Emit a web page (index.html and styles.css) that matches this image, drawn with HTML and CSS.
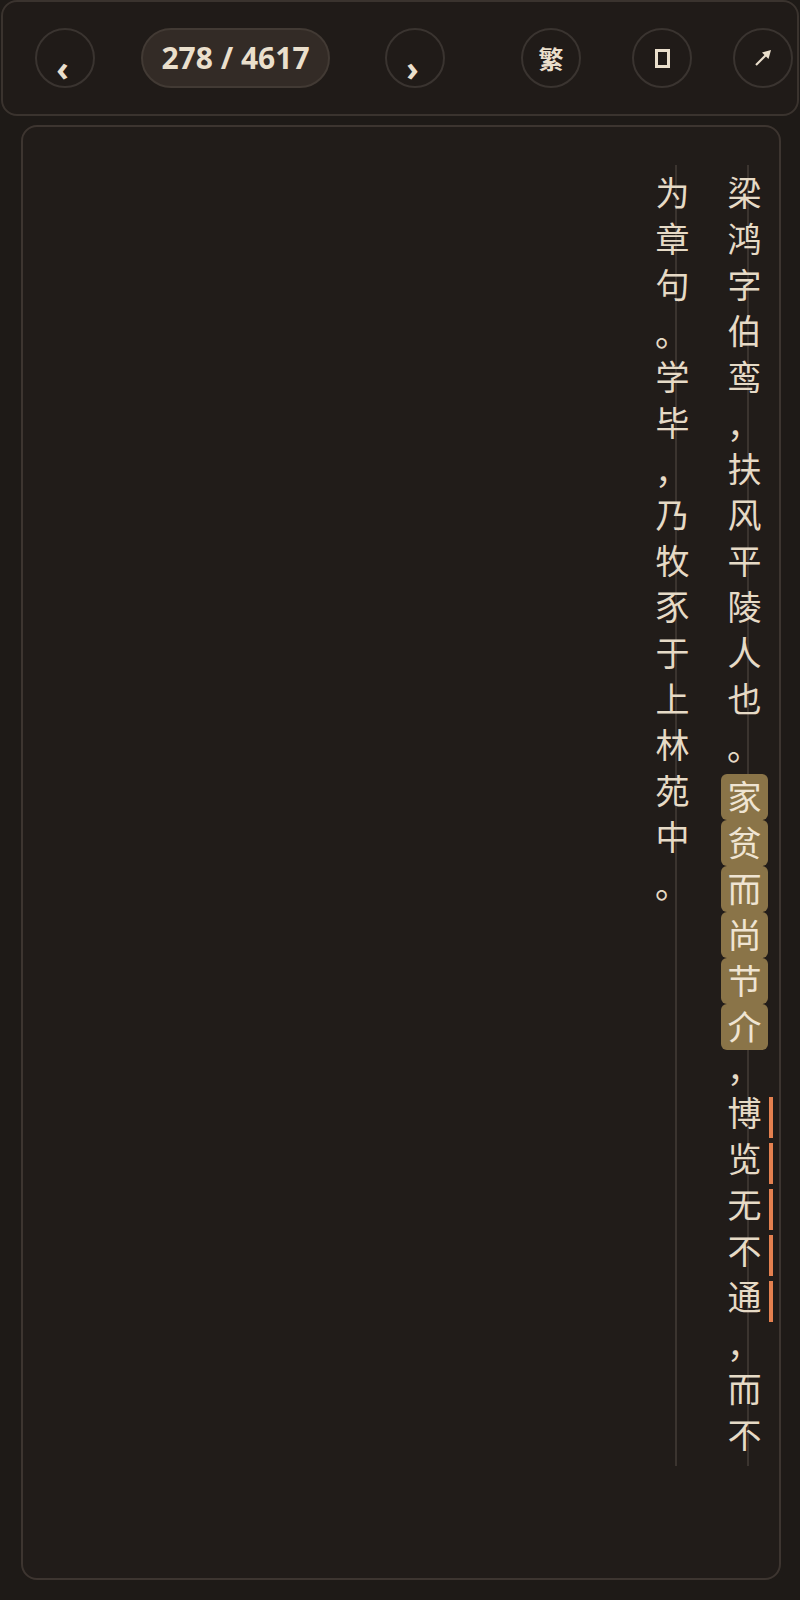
FILE: index.html
```html
<!DOCTYPE html>
<html>
<head>
    <meta charset="utf-8" />
    <title>梁鸿传</title>
    <link rel="stylesheet" href="styles.css">
</head>
<body>
    <div class="bar">
        <button class="btn prev">‹</button>
        <div class="page">278 / 4617</div>
        <button class="btn next">›</button>
        <button class="btn lang">繁</button>
        <button class="btn layout"><span class="tofu"></span></button>
        <button class="btn share">
            <svg width="18" height="18" viewBox="0 0 18 18">
                <line x1="2" y1="16" x2="13" y2="5" stroke="#eadfcc" stroke-width="2.2" />
                <polygon points="17,1 8,3.5 14.5,10" fill="#eadfcc" />
            </svg>
        </button>
    </div>
    <div class="sheet">
        <div class="cols">
            <div class="col">梁鸿字伯鸾<span class="pu">，</span>扶风平陵人也<span class="pu">。</span><span class="hl">家</span><span class="hl">贫</span><span class="hl">而</span><span class="hl">尚</span><span class="hl">节</span><span class="hl">介</span><span class="pu">，</span><span class="mk">博</span><span class="mk">览</span><span class="mk">无</span><span class="mk">不</span><span class="mk">通</span><span class="pu">，</span>而不</div>
            <div class="col">为章句<span class="pu">。</span>学毕<span class="pu">，</span>乃牧豕于上林苑中<span class="pu">。</span></div>
        </div>
    </div>
</body>
</html>
```

FILE: styles.css
```css
html, body {
    margin: 0;
    padding: 0;
    background: #1e1a17;
    font-family: "Noto Sans", "Noto Sans CJK SC", sans-serif;
    color: #eadfcc;
}

.bar {
    display: flex;
    align-items: center;
    box-sizing: border-box;
    height: 116px;
    margin: 0 1px;
    padding-left: 32px;
    border: 2px solid #3a332e;
    border-radius: 16px;
    background: #201b18;
}

.btn {
    display: flex;
    align-items: center;
    justify-content: center;
    flex: none;
    box-sizing: border-box;
    width: 60px;
    height: 60px;
    padding: 0;
    border: 2px solid #3a3430;
    border-radius: 50%;
    background: transparent;
    color: #eadfcc;
    font-family: "Noto Sans", "Noto Sans CJK SC", sans-serif;
    font-weight: bold;
}

.prev, .next {
    font-size: 34px;
    padding-top: 20px;
    line-height: 1;
}
.prev { padding-right: 5px; }
.next { padding-right: 5px; margin-left: 55px; }

.page {
    box-sizing: border-box;
    width: 189px;
    height: 60px;
    margin-left: 46px;
    border: 2px solid #423a34;
    border-radius: 30px;
    background: #332b26;
    font-size: 30px;
    font-weight: bold;
    line-height: 55px;
    text-align: center;
}

.lang {
    margin-left: 76px;
    font-size: 25px;
}
.layout { margin-left: 51px; }
.share { margin-left: 41px; }

.tofu {
    display: block;
    box-sizing: border-box;
    width: 15px;
    height: 19px;
    border: 3px solid #eadfcc;
}

.sheet {
    box-sizing: border-box;
    height: 1455px;
    margin: 9px 19px 0 21px;
    padding: 38px 3px 0 0;
    border: 2px solid #3d3530;
    border-radius: 16px;
    background: #211c19;
}

.cols {
    display: flex;
    flex-direction: row-reverse;
    gap: 8px;
}

.col {
    box-sizing: border-box;
    width: 64px;
    height: 1301px;
    padding-top: 11px;
    writing-mode: vertical-rl;
    white-space: nowrap;
    font-family: "Noto Sans CJK SC", sans-serif;
    font-size: 34px;
    line-height: 64px;
    letter-spacing: 12px;
    color: #e6dac6;
    background: linear-gradient(to right, transparent 35px, #3b342f 35px, #3b342f 37px, transparent 37px);
}

/* punctuation keeps its upright, bottom-left form */
.pu {
    display: inline-block;
    writing-mode: horizontal-tb;
    width: 64px;
    height: 46px;
    line-height: 36px;
    letter-spacing: 0;
    text-align: center;
}

.hl {
    display: inline-block;
    width: 47px;
    height: 46px;
    border-radius: 6px;
    background: #8a7448;
    letter-spacing: 0;
    line-height: 47px;
    text-align: center;
    color: #efe4d2;
}

.mk {
    display: inline-block;
    width: 64px;
    height: 46px;
    background: linear-gradient(#e4804f, #e4804f) no-repeat right 3px top 1px / 4px 41px;
}
```
